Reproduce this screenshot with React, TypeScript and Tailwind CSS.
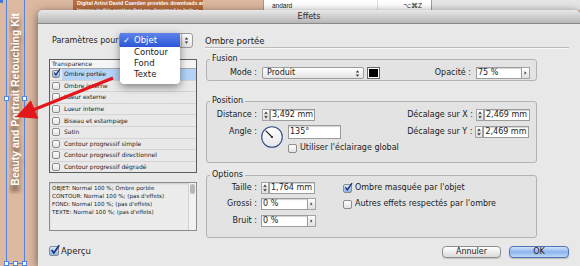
import React from "react";

const effects = [
  "Ombre portée",
  "Ombre interne",
  "Lueur externe",
  "Lueur interne",
  "Biseau et estampage",
  "Satin",
  "Contour progressif simple",
  "Contour progressif directionnel",
  "Contour progressif dégradé",
];

const summary = [
  "OBJET: Normal 100 %; Ombre portée",
  "CONTOUR: Normal 100 %; (pas d'effets)",
  "FOND: Normal 100 %; (pas d'effets)",
  "TEXTE: Normal 100 %; (pas d'effets)",
];

const Checkbox = ({ checked = false, className = "" }: { checked?: boolean; className?: string }) => (
  <div
    className={`relative shrink-0 rounded-[2px] border border-[#8c8c8c] bg-linear-to-b ${
      checked ? "from-[#d6e5f9] to-[#8fb1e3]" : "from-white to-[#e2e2e2]"
    } ${className}`}
  >
    {checked && (
      <svg viewBox="0 0 10 10" className="absolute left-0 top-[-2px] w-[120%] h-[120%] overflow-visible">
        <path d="M1.6 5.2 L4 8.2 L9.6 0.2" fill="none" stroke="#172f73" strokeWidth="1.7" />
      </svg>
    )}
  </div>
);

const Spinner = () => (
  <div className="w-[8px] h-[12px] shrink-0 border border-[#a4a4a4] bg-linear-to-b from-white to-[#e0e0e0]">
    <svg viewBox="0 0 6 10" className="w-full h-full block">
      <path d="M3 1.4 L4.8 3.8 H1.2 Z" fill="#333" />
      <line x1="0.8" x2="5.2" y1="5" y2="5" stroke="#9a9a9a" strokeWidth="0.6" />
      <path d="M3 8.6 L4.8 6.2 H1.2 Z" fill="#333" />
    </svg>
  </div>
);

const ArrowBtn = () => (
  <div className="w-[8px] h-[12px] shrink-0 border border-l-0 border-[#a4a4a4] bg-linear-to-b from-white to-[#e0e0e0] flex items-center justify-center">
    <svg viewBox="0 0 4 6" className="w-[3px] h-[4px] block">
      <path d="M0.5 0.5 L3.5 3 L0.5 5.5 Z" fill="#444" />
    </svg>
  </div>
);

const Field = ({ value, className = "" }: { value: string; className?: string }) => (
  <div
    className={`shrink-0 overflow-hidden whitespace-nowrap bg-white border border-[#9c9c9c] shadow-[inset_0_1px_1px_rgba(0,0,0,0.18)] text-[8px] pl-[1px] flex items-center ${className}`}
  >
    {value}
  </div>
);

const UpDown = () => (
  <svg viewBox="0 0 6 10" className="w-[5px] h-[9px] block">
    <path d="M3 1 L5 3.8 H1 Z" fill="#333" />
    <path d="M3 9 L5 6.2 H1 Z" fill="#333" />
  </svg>
);

const App = () => {
  return (
    <div className="relative w-[580px] h-[266px] overflow-hidden flex bg-[#dcb8a0] font-['DejaVu_Sans',sans-serif] text-[#1c1c1c]">
      {/* left strip, the InDesign frame */}
      <div className="relative w-[38px] shrink-0">
        <div className="ml-[6px] w-[19px] h-[264px] border-x border-b border-[#4f86e0] flex justify-center">
          <div className="mt-[13px] h-fit [writing-mode:vertical-rl] rotate-180 whitespace-nowrap font-['Liberation_Sans',sans-serif] font-bold text-[10.4px] leading-[11px] text-white [text-shadow:-6px_0_5px_rgba(45,25,10,0.8)]">
            Beauty and Portrait Retouching Kit
          </div>
        </div>
        <div className="absolute left-0 top-0 w-[3px] h-[3px] bg-[#3f77dc]" />
        <div className="absolute left-[4px] top-[96px] w-[5px] h-[5px] border border-[#4f86e0] bg-white" />
        <div className="absolute left-[22px] top-[96px] w-[5px] h-[5px] border border-[#4f86e0] bg-white" />
        <div className="absolute left-[4px] top-[261px] w-[5px] h-[5px] border border-[#4f86e0] bg-white" />
        <div className="absolute left-[13px] top-[261px] w-[5px] h-[5px] border border-[#4f86e0] bg-white" />
        <div className="absolute left-[22px] top-[261px] w-[5px] h-[5px] border border-[#4f86e0] bg-white" />
      </div>

      <div className="flex-1 flex flex-col">
        {/* things behind the dialog */}
        <div className="h-[10px] shrink-0 flex">
          <div className="w-[35px]" />
          <div className="w-[130px] bg-[#b86f3f] overflow-hidden text-white font-['Liberation_Sans',sans-serif] font-bold text-[5.2px] leading-[6px] pl-[4px] whitespace-nowrap">
            <div>Digital Artist David Cuerden provides downloads and</div>
            <div className="mt-[1px]">Images in this section that are designed to help e</div>
          </div>
          <div className="w-[60px]" />
          <div className="w-[169px] bg-white border-x border-[#9c9c9c] flex text-[6.5px] leading-[10px] font-['Liberation_Sans',sans-serif]">
            <div className="w-[114px] pl-[8px] pt-[1px] border-r border-[#e0e0e0]">andard</div>
            <div className="pl-[25px] pt-[1px]">⌥⌘Z</div>
          </div>
          <div className="flex-1 bg-[#e5e5e5]" />
        </div>

        {/* dialog */}
        <div className="flex-1 flex flex-col rounded-t-[5px] bg-[#e8e8e8] shadow-[0_2px_10px_rgba(0,0,0,0.55)]">
          <div className="h-[14px] shrink-0 rounded-t-[5px] bg-linear-to-b from-[#e8e8e8] to-[#b7b7b7] border-b border-[#8a8a8a] text-center text-[8px] leading-[13px] text-[#2c2c2c]">
            Effets
          </div>

          <div className="flex-1 flex pl-[11px] pr-[11px]">
            {/* left column */}
            <div className="relative w-[148px] shrink-0 flex flex-col">
              <div className="mt-[9px] h-[15px] flex items-center">
                <span className="ml-[3px] text-[8px] whitespace-nowrap">Paramètres pour</span>
                <div className="ml-auto mr-[5px] w-[74px] shrink-0 h-[15px] rounded-[3px] border border-[#9b9b9b] bg-linear-to-b from-white to-[#e4e4e4] flex justify-end">
                  <div className="w-[11px] h-full border-l border-[#bdbdbd] flex items-center justify-center">
                    <UpDown />
                  </div>
                </div>
              </div>

              <div className="mt-[11px] h-[114px] border border-[#5c5c5c] bg-[#e9e9e9] text-[6px] leading-none overflow-hidden">
                <div className="h-[9px] flex items-center pl-[2px] border-b border-[#a8a8a8] bg-[#f5f5f5]">Transparence</div>
                {effects.map((name, i) => (
                  <div key={name} className="h-[11.6px] flex items-center border-b border-[#d4d4d4]">
                    <Checkbox className="ml-[2px] w-[8px] h-[8px]" checked={i === 0} />
                    <div className={`ml-[2px] flex-1 h-full flex items-center pl-[2px] ${i === 0 ? "bg-[#b4d3f8]" : ""}`}>
                      {name}
                    </div>
                  </div>
                ))}
              </div>

              <div className="mt-[9px] h-[49px] border border-[#8c8c8c] bg-[#ececec] flex shadow-[inset_0_1px_2px_rgba(0,0,0,0.15)]">
                <div className="flex-1 pl-[2px] pt-[1px] text-[5.6px] leading-[8px] whitespace-nowrap overflow-hidden">
                  {summary.map((s) => (
                    <div key={s}>{s}</div>
                  ))}
                </div>
                <div className="w-[8px] border-l border-[#d0d0d0] bg-[#f2f2f2] p-[1px]">
                  <div className="h-[10px] rounded-full bg-[#b8b8b8]" />
                </div>
              </div>

              <div className="mt-[15px] h-[10px] flex items-center">
                <Checkbox className="w-[10px] h-[10px]" checked />
                <span className="ml-[2px] text-[8.5px]">Aperçu</span>
              </div>

              {/* open popup of the select */}
              <div className="absolute left-[71px] top-[9px] w-[60px] h-[51px] bg-white rounded-b-[4px] shadow-[0_3px_8px_rgba(0,0,0,0.45)] text-[8.5px]">
                <div className="h-[14px] flex items-center bg-linear-to-b from-[#5f83ea] to-[#2d56d8] text-white">
                  <span className="w-[14px] pl-[3px]">✓</span>
                  Objet
                </div>
                {["Contour", "Fond", "Texte"].map((t) => (
                  <div key={t} className="h-[11px] flex items-center pl-[14px]">
                    {t}
                  </div>
                ))}
              </div>
            </div>

            {/* right column */}
            <div className="ml-[8px] flex-1 flex flex-col text-[8px] whitespace-nowrap">
              <div className="mt-[11px] h-[13px] leading-[12px] text-[8.5px] border-b border-[#b9b9b9] shadow-[0_1px_0_#f7f7f7]">
                Ombre portée
              </div>

              <fieldset className="mt-[6px] ml-[1px] w-[331px] border border-[#b2b2b2] rounded-[3px] bg-[#e3e3e3] pt-[3px] pb-[1px]">
                <legend className="ml-[3px] px-[2px] text-[8px] leading-[10px]">Fusion</legend>
                <div className="h-[12px] flex items-center">
                  <span className="w-[50px] text-right">Mode :</span>
                  <div className="ml-[5px] w-[102px] h-[12px] rounded-[2px] border border-[#9c9c9c] bg-linear-to-b from-white to-[#e4e4e4] flex items-center">
                    <span className="pl-[4px] flex-1">Produit</span>
                    <div className="pr-[3px]">
                      <UpDown />
                    </div>
                  </div>
                  <div className="ml-[3px] w-[13px] h-[12px] border border-[#6a6a6a] bg-white p-[1px]">
                    <div className="w-full h-full bg-black" />
                  </div>
                  <span className="ml-auto">Opacité :</span>
                  <Field value="75 %" className="ml-[5px] w-[46px] h-[12px]" />
                  <ArrowBtn />
                  <div className="w-[6px]" />
                </div>
              </fieldset>

              <fieldset className="mt-[15px] ml-[1px] w-[331px] border border-[#b2b2b2] rounded-[3px] bg-[#e3e3e3] pt-[3px] pb-[9px]">
                <legend className="ml-[3px] px-[2px] text-[8px] leading-[10px]">Position</legend>
                <div className="flex">
                  <div className="flex flex-col">
                    <div className="h-[12px] flex items-center">
                      <span className="w-[50px] text-right">Distance :</span>
                      <div className="ml-[5px]">
                        <Spinner />
                      </div>
                      <Field value="3,492 mm" className="w-[45px] h-[12px]" />
                    </div>
                    <div className="mt-[4px] flex">
                      <span className="w-[50px] text-right mt-[1px] leading-[12px]">Angle :</span>
                      <svg viewBox="0 0 22 22" className="ml-[4px] mt-[1px] w-[22px] h-[22px] shrink-0">
                        <defs>
                          <linearGradient id="dialg" x1="0" y1="0" x2="0" y2="1">
                            <stop offset="0" stopColor="#ffffff" />
                            <stop offset="1" stopColor="#e6e6e6" />
                          </linearGradient>
                        </defs>
                        <circle cx="11" cy="11" r="10.3" fill="url(#dialg)" stroke="#324a86" strokeWidth="1.1" />
                        <line x1="11" y1="11" x2="4.6" y2="4.6" stroke="#1f1f1f" strokeWidth="1.1" />
                        <circle cx="11" cy="11" r="1.1" fill="#1f1f1f" />
                      </svg>
                      <div className="ml-[5px] flex flex-col">
                        <Field value="135°" className="w-[53px] h-[14px]" />
                        <div className="mt-[4px] h-[10px] flex items-center">
                          <Checkbox className="w-[9px] h-[9px]" />
                          <span className="ml-[3px]">Utiliser l'éclairage global</span>
                        </div>
                      </div>
                    </div>
                  </div>
                  <div className="ml-auto mr-[6px] flex flex-col">
                    <div className="h-[12px] flex items-center">
                      <span>Décalage sur X :</span>
                      <div className="ml-[3px]">
                        <Spinner />
                      </div>
                      <Field value="2,469 mm" className="w-[46px] h-[12px]" />
                    </div>
                    <div className="mt-[5px] h-[12px] flex items-center">
                      <span>Décalage sur Y :</span>
                      <div className="ml-[3px]">
                        <Spinner />
                      </div>
                      <Field value="2,469 mm" className="w-[46px] h-[12px]" />
                    </div>
                  </div>
                </div>
              </fieldset>

              <fieldset className="mt-[7px] ml-[1px] w-[331px] border border-[#b2b2b2] rounded-[3px] bg-[#e3e3e3] pt-[2px] pb-[10px]">
                <legend className="ml-[3px] px-[2px] text-[8px] leading-[10px]">Options</legend>
                <div className="flex">
                  <div className="flex flex-col">
                    <div className="h-[12px] flex items-center">
                      <span className="w-[50px] text-right">Taille :</span>
                      <div className="ml-[4px]">
                        <Spinner />
                      </div>
                      <Field value="1,764 mm" className="w-[46px] h-[12px]" />
                    </div>
                    <div className="mt-[4px] h-[12px] flex items-center">
                      <span className="w-[50px] text-right">Grossi :</span>
                      <Field value="0 %" className="ml-[4px] w-[47px] h-[12px]" />
                      <ArrowBtn />
                    </div>
                    <div className="mt-[5px] h-[12px] flex items-center">
                      <span className="w-[50px] text-right">Bruit :</span>
                      <Field value="0 %" className="ml-[4px] w-[47px] h-[12px]" />
                      <ArrowBtn />
                    </div>
                  </div>
                  <div className="ml-[27px] flex flex-col">
                    <div className="h-[12px] flex items-center">
                      <Checkbox className="w-[9px] h-[9px]" checked />
                      <span className="ml-[3px]">Ombre masquée par l'objet</span>
                    </div>
                    <div className="mt-[4px] h-[12px] flex items-center">
                      <Checkbox className="w-[9px] h-[9px]" />
                      <span className="ml-[3px]">Autres effets respectés par l'ombre</span>
                    </div>
                  </div>
                </div>
              </fieldset>

              <div className="mt-[8px] flex justify-end gap-[8px]">
                <div className="w-[59px] h-[12px] rounded-[4px] border border-[#8e8e8e] bg-linear-to-b from-white to-[#dadada] shadow-[0_1px_1px_rgba(0,0,0,0.15)] flex items-center justify-center">
                  Annuler
                </div>
                <div className="w-[60px] h-[12px] rounded-[4px] border border-[#4f73b3] bg-linear-to-b from-[#d2e3f9] via-[#8db4ec] to-[#bcd8f8] shadow-[0_1px_1px_rgba(0,0,0,0.2)] flex items-center justify-center">
                  OK
                </div>
              </div>
            </div>
          </div>
        </div>
      </div>

      {/* red annotation arrow */}
      <svg className="absolute left-0 top-0 w-[580px] h-[266px] pointer-events-none" viewBox="0 0 580 266">
        <line x1="113" y1="78" x2="33" y2="110" stroke="#e3161b" strokeWidth="3" />
        <polygon points="16,117 30.9,100.2 38.3,118.8" fill="#e3161b" />
      </svg>
    </div>
  );
};

export default App;
